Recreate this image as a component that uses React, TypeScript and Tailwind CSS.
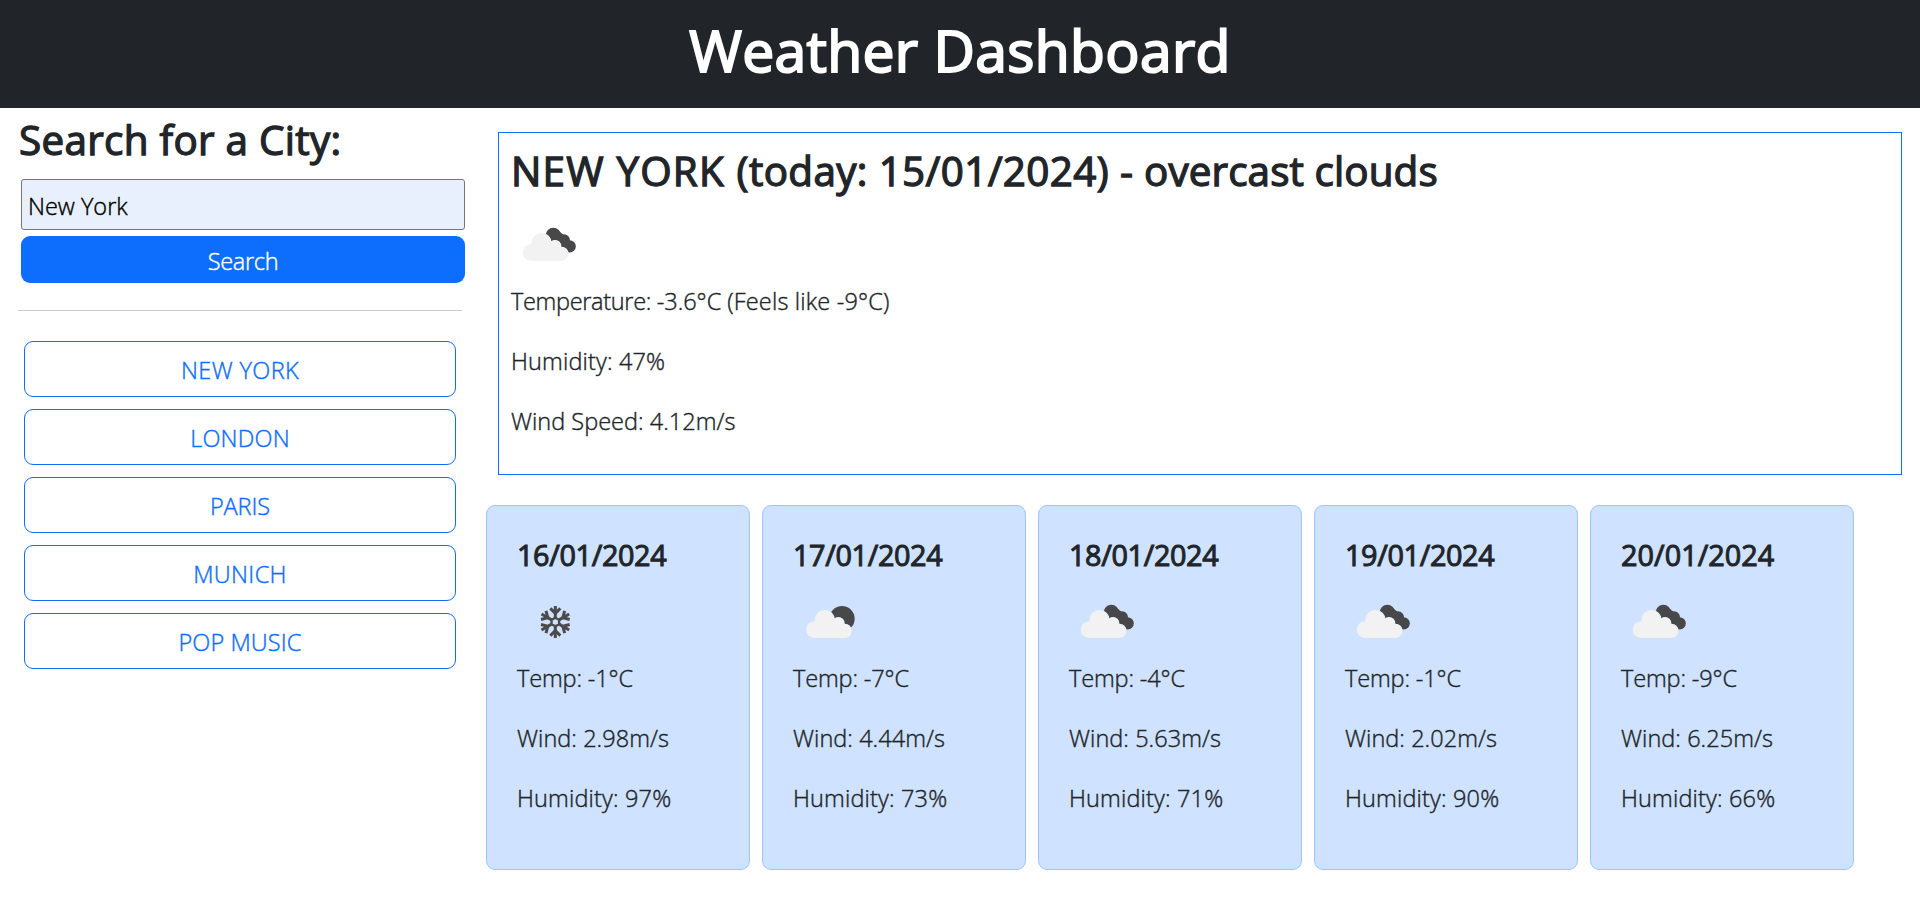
type IconName = "overcast" | "partly" | "snow";

const CLOUD = [
  [60, 134, 25],
  [91, 105, 30],
  [132, 115, 18],
  [151, 138, 21],
];

function CloudShape({ grow = 0, fill }: { grow?: number; fill: string }) {
  return (
    <g fill={fill}>
      {CLOUD.map(([x, y, r]) => (
        <circle key={x} cx={x} cy={y} r={r + grow} />
      ))}
      <rect x="60" y={120 - grow} width="91" height={39 + grow * 2} />
    </g>
  );
}

function WeatherIcon({ name, id }: { name: IconName; id: string }) {
  if (name === "snow") {
    return (
      <svg className="block size-[75px]" viewBox="0 0 225 225" fill="none" stroke="#4b4b4e" strokeWidth="9">
        <path d="M115 98l11.200 6.500v13l-11.200 6.500l-11.200-6.500v-13z" strokeWidth="7" />
        {[0, 60, 120, 180, 240, 300].map((a) => (
          <g key={a} transform={`rotate(${a} 115 111)`}>
            <path d="M115 98V63" />
            <path d="M100 70l15 15l15-15" />
          </g>
        ))}
      </svg>
    );
  }
  return (
    <svg className="block size-[75px]" viewBox="0 0 225 225">
      <mask id={id} maskUnits="userSpaceOnUse" x="0" y="0" width="225" height="225">
        <rect width="225" height="225" fill="white" />
        <g transform={name === "partly" ? "translate(4 0)" : undefined}>
          <CloudShape grow={1} fill="black" />
        </g>
      </mask>
      <g mask={`url(#${id})`} fill="#48484a">
        {name === "partly" ? (
          <circle cx="147" cy="101" r="38" />
        ) : (
          <>
            <circle cx="127" cy="82" r="23" />
            <circle cx="159" cy="97" r="18" />
            <circle cx="176" cy="115" r="18.500" />
            <path d="M120 85L140 66L172 92L184 110L165 130L140 122z" />
          </>
        )}
      </g>
      <g transform={name === "partly" ? "translate(4 0)" : undefined}>
        <CloudShape fill="#f2f2f2" />
      </g>
    </svg>
  );
}

const cities = [
  { name: "NEW YORK", spacing: "tracking-[0.4px]" },
  { name: "LONDON", spacing: "tracking-[0.2px]" },
  { name: "PARIS", spacing: "tracking-[-0.1px]" },
  { name: "MUNICH", spacing: "tracking-[0.35px]" },
  { name: "POP MUSIC", spacing: "tracking-[0.1px]" },
];

const forecast: { date: string; spacing: string; icon: IconName; temp: number; wind: string; humidity: number }[] = [
  { date: "16/01/2024", spacing: "tracking-[-0.35px]", icon: "snow", temp: -1, wind: "2.98", humidity: 97 },
  { date: "17/01/2024", spacing: "tracking-[-0.35px]", icon: "partly", temp: -7, wind: "4.44", humidity: 73 },
  { date: "18/01/2024", spacing: "tracking-[-0.35px]", icon: "overcast", temp: -4, wind: "5.63", humidity: 71 },
  { date: "19/01/2024", spacing: "tracking-[-0.35px]", icon: "overcast", temp: -1, wind: "2.02", humidity: 90 },
  { date: "20/01/2024", spacing: "tracking-[0.05px]", icon: "overcast", temp: -9, wind: "6.25", humidity: 66 },
];

export default function App() {
  return (
    <div className="min-h-[900px] bg-white font-['Open_Sans',sans-serif] text-[23.5px] leading-9 font-light text-[#212529] [-webkit-text-stroke:0.4px]">
      <header className="flex h-[108px] justify-center bg-[#212529] pt-[14px]">
        <h1 className="text-[57px] leading-[72px] font-medium tracking-[0.33px] text-white [-webkit-text-stroke:2px]">
          Weather Dashboard
        </h1>
      </header>
      <div className="flex">
        <aside className="w-[480px] shrink-0 px-[18px] pt-[7px]">
          <h2 className="pl-px text-[40.4px] leading-[50px] font-medium tracking-[0.3px] [-webkit-text-stroke:1.3px]">
            Search for a City:
          </h2>
          <form className="mt-[14px] ml-[3px] flex w-[444px] flex-col gap-[6px]">
            <input
              className="h-[51px] rounded-[3px] border border-[#767676] bg-[#e8f0fe] px-[6px] pt-[2px] text-black outline-none"
              defaultValue="New York"
            />
            <button type="button" className="h-[47px] rounded-[9px] bg-[#0d6efd] pt-[3px] tracking-[-0.3px] text-white">
              Search
            </button>
          </form>
          <hr className="mt-[27px] border-[#c8c9ca]" />
          <div className="mt-[30px] ml-[6px] flex w-[432px] flex-col gap-3">
            {cities.map((c) => (
              <button
                key={c.name}
                type="button"
                className={`h-14 rounded-[9px] border border-[#0d6efd] pt-[2px] text-[#0d6efd] ${c.spacing}`}
              >
                {c.name}
              </button>
            ))}
          </div>
        </aside>
        <main className="flex-1 pt-6 pr-[18px]">
          <section className="ml-[18px] h-[343px] border border-[#0d6efd] pt-[13px] pl-3">
            <h2 className="text-[40.4px] leading-[50px] font-medium tracking-[0.37px] [-webkit-text-stroke:1.3px]">
              <span className="tracking-[1.2px]">NEW YORK </span>
              (today: 15/01/2024) - <span className="tracking-[0.1px]">overcast clouds</span>
            </h2>
            <div className="mt-3">
              <WeatherIcon name="overcast" id="today" />
            </div>
            <div className="flex flex-col gap-6">
              <p className="tracking-[-0.05px]">
                <span className="tracking-[-0.32px]">Temperature: </span>
                -3.6°C <span className="tracking-[0.17px]">(Feels like -9°C)</span>
              </p>
              <p className="tracking-[0.15px]">Humidity: 47%</p>
              <p className="tracking-[0.02px]">Wind Speed: 4.12m/s</p>
            </div>
          </section>
          <section className="mt-[30px] ml-[6px] flex gap-3">
            {forecast.map((d) => (
              <article
                key={d.date}
                className="h-[365px] w-[264px] rounded-[9px] border border-[#9ec5fe] bg-[#cfe2ff] px-[30px] pt-[30px]"
              >
                <h3 className={`text-[28.8px] leading-[37px] font-medium [-webkit-text-stroke:1px] ${d.spacing}`}>{d.date}</h3>
                <div className="mt-3">
                  <WeatherIcon name={d.icon} id={`day-${d.humidity}`} />
                </div>
                <div className="flex flex-col gap-6">
                  <p className="tracking-[-0.15px]">Temp: {d.temp}°C</p>
                  <p className="tracking-[0.05px]">Wind: {d.wind}m/s</p>
                  <p className="tracking-[0.15px]">Humidity: {d.humidity}%</p>
                </div>
              </article>
            ))}
          </section>
        </main>
      </div>
    </div>
  );
}
